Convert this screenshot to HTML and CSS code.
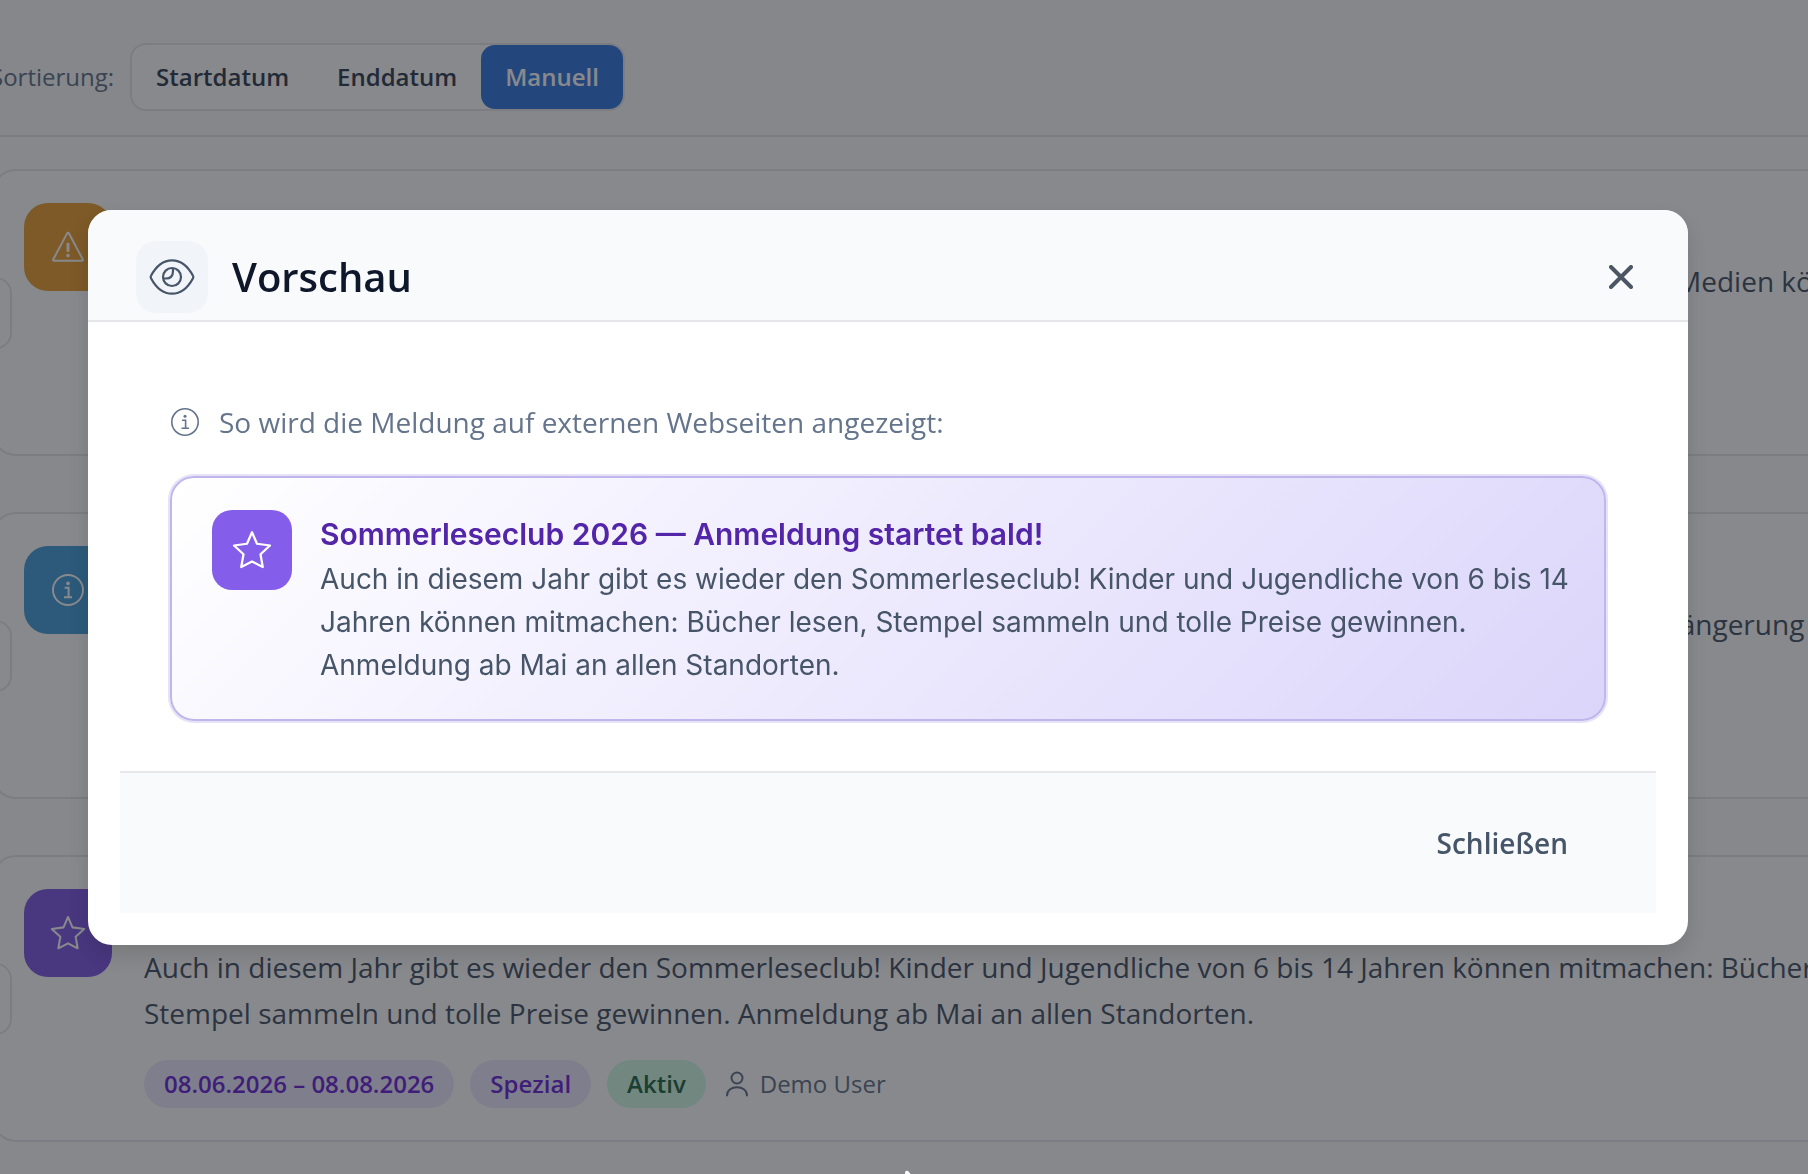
FILE: index.html
```
<!DOCTYPE html>
<html lang="de">
<head>
  <meta charset="UTF-8">
  <meta name="viewport" content="width=device-width, initial-scale=1.0">
  <title>Meldungen</title>
  <link rel="stylesheet" href="styles.css">
</head>
<body>
  <div class="page">
    <div class="toolbar">
      <span class="toolbar-label" id="sort-label">Sortierung:</span>
      <div class="segmented" role="group" aria-labelledby="sort-label">
        <button type="button">Startdatum</button>
        <button type="button">Enddatum</button>
        <button type="button" class="active">Manuell</button>
      </div>
    </div>

    <main class="list">
      <article class="card">
        <button type="button" class="handle" aria-label="Verschieben"></button>
        <div class="tile tile-warning">
          <svg viewBox="0 0 16 16" width="32" height="32" fill="none" stroke="currentColor" stroke-width="1" stroke-linejoin="round" stroke-linecap="round">
            <path d="M7.5 1.3 Q8 .4 8.5 1.3 L15.3 14 Q15.700 14.900 14.900 14.900 H1.100 Q.3 14.900 .7 14 Z"/>
            <path d="M8 6.500 V9.800" stroke-width="1.500"/>
            <circle cx="8" cy="12.300" r=".4"/>
          </svg>
        </div>
        <div class="card-body">
          <h2>Rückgabe eingeschränkt</h2>
          <p>Wegen Wartungsarbeiten ist der Rückgabeautomat in der Hauptstelle ab Mai bis auf Weiteres gänzlich außer Betrieb. Medien können während der Öffnungszeiten an der Theke abgegeben werden.</p>
          <div class="meta"><span class="pill pill-special">Warnung</span></div>
        </div>
      </article>

      <article class="card">
        <button type="button" class="handle" aria-label="Verschieben"></button>
        <div class="tile tile-info">
          <svg viewBox="0 0 16 16" width="32" height="32" fill="none" stroke="currentColor">
            <circle cx="8" cy="8" r="7.500"/>
            <path d="M6.300 6.900 H8.300 V11.600 M6 11.600 H10"/>
            <circle cx="8" cy="4.700" r=".9" fill="currentColor" stroke="none"/>
          </svg>
        </div>
        <div class="card-body">
          <h2>Neue Onleihe-App</h2>
          <p>Die neue Version der Onleihe-App ist da und bringt viele Neuerungen und Verbesserungen, darunter die einfache Verlängerung ausgeliehener Titel und eine schnellere Suche in unserem Katalog.</p>
          <div class="meta"><span class="pill pill-special">Info</span></div>
        </div>
      </article>

      <article class="card">
        <button type="button" class="handle" aria-label="Verschieben"></button>
        <div class="tile tile-special">
          <svg viewBox="0 0 16 16" width="36" height="36" fill="none" stroke="currentColor" stroke-width=".9" stroke-linejoin="round">
            <path d="M8 .9 L10 5.500 L15.200 6.200 L11.400 9.700 L12.300 14.800 L8 12.600 L3.700 14.800 L4.600 9.700 L.8 6.200 L6 5.500 Z"/>
          </svg>
        </div>
        <div class="card-body">
          <h2>Sommerleseclub 2026</h2>
          <p>Auch in diesem Jahr gibt es wieder den Sommerleseclub! Kinder und Jugendliche von 6 bis 14 Jahren können mitmachen: Bücher lesen, Stempel sammeln und tolle Preise gewinnen. Anmeldung ab Mai an allen Standorten.</p>
          <div class="meta">
            <span class="pill pill-special">08.06.2026 – 08.08.2026</span>
            <span class="pill pill-special">Spezial</span>
            <span class="pill pill-active">Aktiv</span>
            <span class="author">
              <svg viewBox="0 0 22 28" width="22" height="28" fill="none" stroke="currentColor" stroke-width="2" stroke-linecap="round">
                <circle cx="11" cy="8" r="5.500"/>
                <path d="M1 25.500 C1 14.500 21 14.500 21 25.500"/>
              </svg>
              Demo User
            </span>
          </div>
        </div>
      </article>
    </main>
  </div>

  <div class="overlay">
    <div class="modal" role="dialog" aria-modal="true" aria-labelledby="modal-title">
      <header class="modal-header">
        <div class="modal-icon">
          <svg viewBox="0 0 46 36" width="46" height="36" fill="none" stroke="currentColor" stroke-width="2.200" stroke-linejoin="round">
            <path d="M2 16.800 C13 -3.800 33 -3.800 44 16.800 Q44.700 18 44 19.200 C33 39.800 13 39.800 2 19.200 Q1.300 18 2 16.800 Z"/>
            <circle cx="23" cy="18" r="9"/>
            <path d="M24 9 V12 Q24 19.500 17 19.500 H14.500"/>
          </svg>
        </div>
        <h1 id="modal-title">Vorschau</h1>
        <button type="button" class="close" aria-label="Dialog schließen">
          <svg viewBox="0 0 24 24" width="24" height="24" fill="none" stroke="currentColor" stroke-width="4" stroke-linecap="round">
            <path d="M2 2 L22 22 M22 2 L2 22"/>
          </svg>
        </button>
      </header>

      <div class="modal-body">
        <div class="preview">
          <p class="hint">
            <svg viewBox="0 0 28 28" width="28" height="28" fill="none" stroke="currentColor" stroke-width="1.600">
              <circle cx="14" cy="14" r="13.200"/>
              <path d="M11 12.300 H14.600 V20.300 M10.500 20.300 H18"/>
              <circle cx="14" cy="8.300" r="1.500" fill="currentColor" stroke="none"/>
            </svg>
            So wird die Meldung auf externen Webseiten angezeigt:
          </p>
          <div class="notice">
            <div class="notice-icon">
              <svg viewBox="0 0 16 16" width="40" height="40" fill="none" stroke="currentColor" stroke-width=".9" stroke-linejoin="round">
                <path d="M8 .9 L10 5.500 L15.200 6.200 L11.400 9.700 L12.300 14.800 L8 12.600 L3.700 14.800 L4.600 9.700 L.8 6.200 L6 5.500 Z"/>
              </svg>
            </div>
            <div class="notice-text">
              <h3>Sommerleseclub 2026 — Anmeldung startet bald!</h3>
              <p>Auch in diesem Jahr gibt es wieder den Sommerleseclub! Kinder und Jugendliche von 6 bis 14 Jahren können mitmachen: Bücher lesen, Stempel sammeln und tolle Preise gewinnen. Anmeldung ab Mai an allen Standorten.</p>
            </div>
          </div>
        </div>
        <footer class="modal-footer">
          <button type="button" class="btn">Schließen</button>
        </footer>
      </div>
    </div>
  </div>

  <svg class="pointer" viewBox="0 0 12 16" width="12" height="16">
    <path d="M1 3 Q1 0 4 1 L11 9 L1 16 Z" fill="#fff"/>
  </svg>
</body>
</html>
```
FILE: styles.css
```
* {
  box-sizing: border-box;
}

body {
  margin: 0;
  height: 100vh;
  overflow: hidden;
  background-color: #fdfdfe;
  color: #475569;
  font-family: "Open Sans", sans-serif;
  font-size: 28px;
}

h1, h2, h3, p {
  margin: 0;
}

button {
  border: 0;
  background: none;
  font-family: inherit;
  color: inherit;
}

svg {
  flex: none;
}

/* the list is wider than the window on both sides */
.page {
  margin-left: -8px;
  margin-right: -160px;
}

.toolbar {
  display: flex;
  align-items: center;
  gap: 16px;
  height: 137px;
  margin-left: -2px;
  padding-top: 18px;
  border-bottom: 2px solid #e5e7eb;
  background-color: #fafafb;
}

.toolbar-label {
  color: #64748b;
  font-size: 24px;
}

.segmented {
  display: flex;
  border: 2px solid #e5e7eb;
  border-radius: 16px;
  background-color: #fff;
}

.segmented button {
  height: 64px;
  padding: 0 24px;
  border-radius: 14px;
  color: #334155;
  font-size: 24px;
  font-weight: 600;
}

.segmented .active {
  background-color: #357ae0;
  color: #fff;
}

.list {
  display: flex;
  flex-direction: column;
  gap: 56px;
  padding-top: 32px;
}

.card {
  position: relative;
  display: flex;
  gap: 32px;
  padding: 32px 30px;
  border: 2px solid #e5e7eb;
  border-radius: 24px;
  background-color: #fff;
}

.handle {
  position: absolute;
  top: 50%;
  left: -54px;
  width: 72px;
  height: 72px;
  margin-top: -36px;
  border: 2px solid #e5e7eb;
  border-radius: 16px;
  background-color: #fff;
}

.tile {
  display: flex;
  flex: none;
  align-items: center;
  justify-content: center;
  width: 88px;
  height: 88px;
  border-radius: 24px;
  color: #fff;
}

.tile-warning {
  background-color: #e8a136;
}

.tile-info {
  background-color: #48a0dc;
}

.tile-special {
  background-color: #805be6;
}

.card-body h2 {
  margin-bottom: 15px;
  font-size: 28px;
  line-height: 40px;
}

.card-body p {
  line-height: 46px;
}

.meta {
  display: flex;
  align-items: center;
  gap: 16px;
  margin-top: 24px;
}

.pill {
  padding: 0 20px;
  border-radius: 24px;
  font-size: 24px;
  font-weight: 600;
  line-height: 48px;
}

.pill-special {
  background-color: #ede9fe;
  color: #6d28d9;
}

.pill-active {
  background-color: #d1fae5;
  color: #276749;
}

.author {
  display: flex;
  align-items: center;
  gap: 12px;
  margin-left: 4px;
  color: #64748b;
  font-size: 24px;
  line-height: 32px;
}

.overlay {
  position: fixed;
  inset: 0;
  display: flex;
  align-items: flex-start;
  padding: 210px 120px 0 88px;
  background-color: rgba(17, 19, 26, 0.5);
}

.modal {
  flex: 1;
  overflow: hidden;
  border-radius: 24px;
  background-color: #fff;
  box-shadow: 0 10px 20px rgba(0, 0, 0, 0.12);
}

.modal-header {
  display: flex;
  align-items: center;
  gap: 24px;
  padding: 31px 47px 7px 48px;
  border-bottom: 2px solid #e5e7eb;
  background-color: #f9fafc;
}

.modal-icon {
  display: flex;
  align-items: center;
  justify-content: center;
  width: 72px;
  height: 72px;
  border-radius: 20px;
  background-color: #f1f5f9;
  color: #475569;
}

.modal-header h1 {
  flex: 1;
  color: #0f172a;
  font-size: 40px;
  font-weight: 600;
  line-height: 52px;
}

.close {
  display: flex;
  align-items: center;
  justify-content: center;
  width: 40px;
  height: 40px;
  padding: 0;
  color: #4b5563;
}

.modal-body {
  padding: 32px;
}

.preview {
  padding: 48px;
}

.hint {
  display: flex;
  align-items: center;
  gap: 20px;
  margin-bottom: 34px;
  padding-left: 3px;
  color: #64748b;
  line-height: 40px;
}

.notice {
  display: flex;
  gap: 28px;
  margin-bottom: 2px;
  margin-inline: 2px;
  padding: 32px 28px 32px 40px;
  border: 2px solid #c1b5ee;
  border-radius: 24px;
  background: linear-gradient(135deg, #fff, #f1eefe 40%, #dbd5fa);
  box-shadow: 0 0 0 2px #e5e3f5;
  font-family: Inter, sans-serif;
}

.notice-icon {
  display: flex;
  flex: none;
  align-items: center;
  justify-content: center;
  width: 80px;
  height: 80px;
  border-radius: 20px;
  background-color: #845eea;
  color: #fff;
}

.notice h3 {
  color: #5325a8;
  font-size: 30px;
  font-weight: 600;
  line-height: 48px;
}

.notice p {
  line-height: 43px;
}

.modal-footer {
  display: flex;
  justify-content: flex-end;
  padding: 40px 48px;
  border-top: 2px solid #e5e7eb;
  background-color: #f9fafc;
}

.btn {
  height: 60px;
  padding: 0 40px;
  font-size: 28px;
  font-weight: 600;
}

.pointer {
  position: fixed;
  bottom: -12px;
  left: 904px;
}
```
